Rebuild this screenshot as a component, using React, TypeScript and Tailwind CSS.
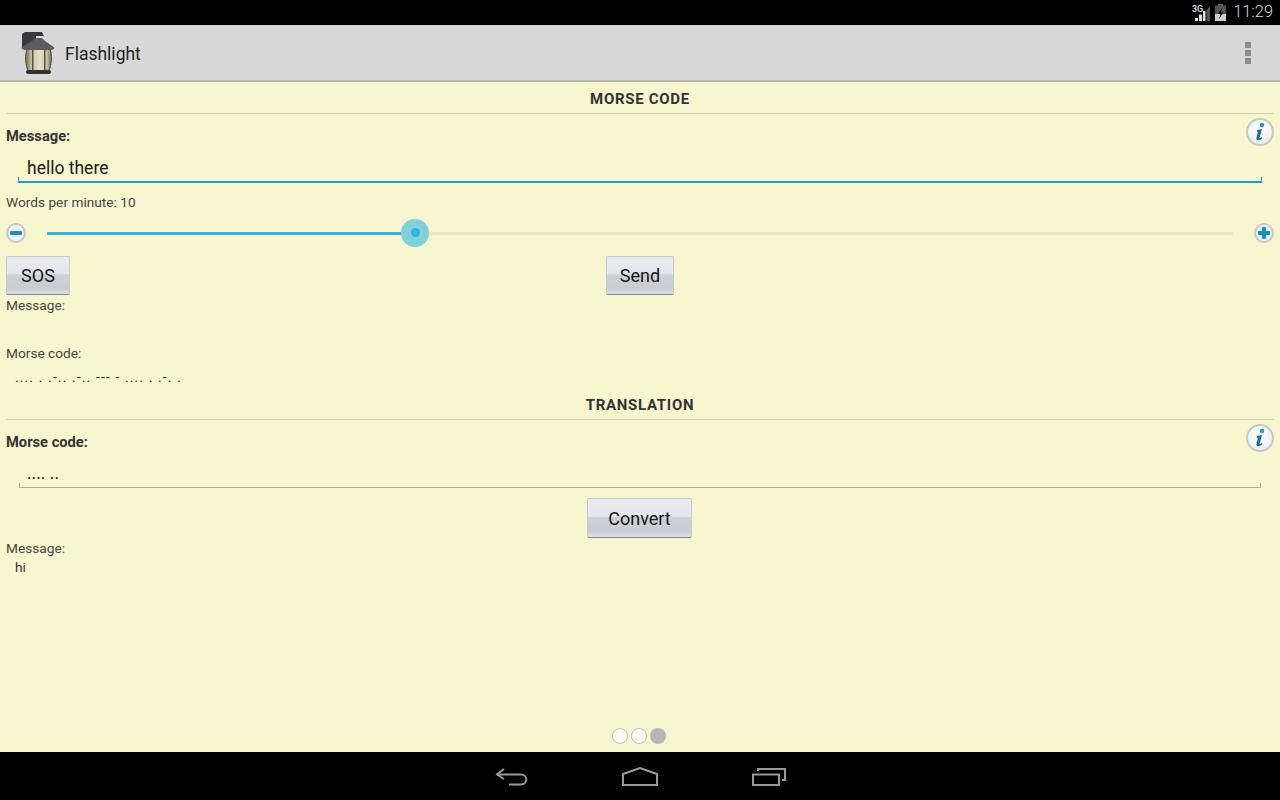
import type { ReactNode } from "react";

function LampIcon() {
  return (
    <svg width="36" height="44" viewBox="0 0 36 44" className="mt-[2px]">
      <defs>
        <linearGradient id="glass" x1="0" x2="1" y1="0" y2="0">
          <stop offset="0" stopColor="#6f6c5a" />
          <stop offset="0.25" stopColor="#cfc7aa" />
          <stop offset="0.55" stopColor="#e6dfc8" />
          <stop offset="0.8" stopColor="#cfc7aa" />
          <stop offset="1" stopColor="#77745f" />
        </linearGradient>
      </defs>
      <path d="M4 2 L7 0 H24 L26 4 H18 V16 H4 Z" fill="#3a3a3c" />
      <path d="M10 39 C7 31 7 24 9 16 H32 C34 24 34 31 31 39 Z" fill="url(#glass)" stroke="#4b4a43" strokeWidth="1" />
      <rect x="14" y="17" width="1.500" height="22" fill="#55534a" />
      <rect x="26" y="17" width="1.500" height="22" fill="#55534a" />
      <path d="M3 16 L14 9 L17 6 H24 L27 9 L37 16 L34 18 H6 Z" fill="#5c5c5f" />
      <rect x="8" y="38" width="25" height="4" rx="2" fill="#333333" />
    </svg>
  );
}

function StatusIcons() {
  return (
    <div className="flex items-center gap-[5px]">
      <svg width="18" height="18" viewBox="0 0 18 18">
        <text x="0" y="8" fontSize="9" fontWeight="500" fill="#e0e0e0" fontFamily="Roboto, sans-serif">3G</text>
        <path d="M3 17 H6 V14 H3 Z M7 17 H10 V10.500 H7 Z M11 17 H13.500 V7 H11 Z" fill="#e4e4e4" />
        <path d="M14.500 17 H18 V2 L14.500 6 Z" fill="#555" />
      </svg>
      <svg width="11" height="17" viewBox="0 0 11 17">
        <rect x="3" y="0" width="5" height="2" fill="#666" />
        <rect x="0" y="1.500" width="11" height="15.500" fill="#555" />
        <rect x="0" y="10" width="11" height="7" fill="#cfcfcf" />
        <path d="M7 4 L3 10 H5.500 L4 15 L8.500 8.500 H6 Z" fill="#000" />
      </svg>
    </div>
  );
}

function InfoBadge() {
  return (
    <div className="flex h-[28px] w-[28px] items-center justify-center rounded-full border-2 border-[#c9c9c4] bg-[radial-gradient(circle_at_50%_35%,#ffffff,#e6e9ec)]">
      <svg width="12" height="20" viewBox="0 0 12 20">
        <circle cx="8" cy="3" r="2.300" fill="#1c9ad0" />
        <path d="M3 8 L8 7 L5.600 15.500 C5.400 16.500 6.500 16.200 8 15 L8.300 16 C6.500 18.300 2 19.500 2.400 16 L3.900 10 L2.800 9.500 Z" fill="#17709c" />
      </svg>
    </div>
  );
}

function RoundStep({ plus }: { plus?: boolean }) {
  return (
    <div className="relative h-[20px] w-[20px] rounded-full border-2 border-[#c9c9c4] bg-[#eef1f3]">
      <div className="absolute left-[2px] top-[6px] h-[4px] w-[12px] rounded-[1px] bg-[#1a8fc4]" />
      {plus && <div className="absolute left-[6px] top-[2px] h-[12px] w-[4px] rounded-[1px] bg-[#1a8fc4]" />}
    </div>
  );
}

function GlossButton({ children, className }: { children: ReactNode; className: string }) {
  return (
    <button
      className={`rounded-[2px] border border-[#c3ccd6] border-b-[#7189ab] bg-[linear-gradient(#e9ebf0_0%,#e3e6ea_46%,#cdd2d6_48%,#c8cdd1_85%,#dde0e2_100%)] text-[18px] leading-none text-[#161616] ${className}`}
    >
      {children}
    </button>
  );
}

function SectionTitle({ children, className = "" }: { children: ReactNode; className?: string }) {
  return (
    <div className={`flex h-[32px] items-center justify-center border-b border-[#cfcfb6] pt-[3px] text-[15px] font-bold tracking-[0.7px] text-[#333333] ${className}`}>
      {children}
    </div>
  );
}

function FieldRow({ label }: { label: string }) {
  return (
    <div className="flex h-[38px] items-start justify-between pt-[4px]">
      <span className="pt-[9px] text-[14.7px] font-bold leading-[18px] text-[#333333]">{label}</span>
      <InfoBadge />
    </div>
  );
}

function Caption({ children, className = "" }: { children: ReactNode; className?: string }) {
  return <div className={`text-[13.7px] leading-[18px] text-[#444444] ${className}`}>{children}</div>;
}

// underline with the small end ticks of the holo text field
function TextField({ value, active }: { value: string; active?: boolean }) {
  const line = active ? "bg-[#1a9dc9]" : "bg-[#b0b08e]";
  return (
    <div className={`relative flex items-center text-[17.5px] text-[#1a1a1a] ${active ? "mx-[12px] h-[31px] border-b-2 border-[#1a9dc9] pl-[9px] pt-[3px]" : "mx-[13px] h-[30px] border-b border-[#b0b08e] pl-[8px] pt-[1px]"}`}>
      {value}
      <div className={`absolute bottom-0 left-0 h-[4px] w-[1px] ${line}`} />
      <div className={`absolute bottom-0 right-0 h-[4px] w-[1px] ${line}`} />
    </div>
  );
}

export default function App() {
  return (
    <div className="flex h-screen w-[1280px] flex-col overflow-hidden bg-black font-['Roboto',sans-serif]">
      <div className="flex h-[25px] shrink-0 items-center justify-end gap-[7px] pr-[7px] text-[16.4px] font-light text-[#d8d8d8]">
        <StatusIcons />
        <span>11:29</span>
      </div>

      <div className="flex h-[57px] shrink-0 items-center justify-between border-b-2 border-[#b6b6b0] bg-[#d8d8d8] pl-[18px] pr-[29px]">
        <div className="flex items-center gap-[11px]">
          <LampIcon />
          <span className="pt-[4px] text-[17.5px] text-[#222222]">Flashlight</span>
        </div>
        <div className="flex flex-col gap-[2px]">
          <div className="h-[6px] w-[6px] bg-[#8e8e8e]" />
          <div className="h-[6px] w-[6px] bg-[#8e8e8e]" />
          <div className="h-[6px] w-[6px] bg-[#8e8e8e]" />
        </div>
      </div>

      <div className="relative flex-1 bg-[#f6f7cf] px-[6px]">
        <SectionTitle>MORSE CODE</SectionTitle>
        <FieldRow label="Message:" />

        <TextField value="hello there" active />

        <Caption className="mt-[10px]">Words per minute: 10</Caption>

        <div className="mt-[10px] flex h-[24px] items-center">
          <RoundStep />
          <div className="relative mx-[21px] h-[3px] flex-1 bg-[#e6e7c4]">
            <div className="h-[3px] w-[368px] bg-[#33b5e0]" />
            <div className="absolute left-[354px] top-[-13px] flex h-[28px] w-[28px] items-center justify-center rounded-full bg-[#7fd1dc]">
              <div className="h-[9px] w-[9px] rounded-full bg-[#33b5e5]" />
            </div>
          </div>
          <RoundStep plus />
        </div>

        <div className="mt-[11px] grid grid-cols-[1fr_auto_1fr]">
          <GlossButton className="h-[39px] w-[64px]">SOS</GlossButton>
          <GlossButton className="h-[39px] w-[68px]">Send</GlossButton>
        </div>

        <Caption className="mt-[1px]">Message:</Caption>
        <Caption className="mt-[30px]">Morse code:</Caption>
        <div className="mt-[6px] pl-[9px] text-[14px] leading-[18px] tracking-[1.1px] text-[#333333]">
          .... . .-.. .-.. --- - .... . .-. .
        </div>

        <SectionTitle className="mt-[2px]">TRANSLATION</SectionTitle>
        <FieldRow label="Morse code:" />

        <TextField value=".... .." />

        <div className="mt-[10px] flex justify-center pr-[1px]">
          <GlossButton className="h-[40px] w-[105px] pt-[2px]">Convert</GlossButton>
        </div>

        <Caption className="mt-[1px]">Message:</Caption>
        <div className="mt-[1px] pl-[9px] text-[13.7px] leading-[18px] text-[#333333]">hi</div>

        <div className="absolute bottom-[8px] left-0 flex w-full justify-center gap-[3px] pr-[2px]">
          <div className="h-[16px] w-[16px] rounded-full border border-[#bdbdbd] bg-[#fbfbf7]" />
          <div className="h-[16px] w-[16px] rounded-full border border-[#bdbdbd] bg-[#fbfbf7]" />
          <div className="h-[16px] w-[16px] rounded-full bg-[#b7b7b7]" />
        </div>
      </div>

      <div className="flex h-[48px] shrink-0 items-center justify-center gap-[94px] pt-[2px]">
        <svg width="34" height="20" viewBox="0 0 34 20" fill="none" stroke="#9a9a9a" strokeWidth="2">
          <path d="M10 2 L3 7.500 L10 12" />
          <path d="M3 7.500 H27 C34 7.500 34 17.500 27 17.500 H15" />
        </svg>
        <svg width="36" height="20" viewBox="0 0 36 20" fill="none" stroke="#9a9a9a" strokeWidth="2">
          <path d="M1 18 V7 L18 1 L35 7 V18 Z" />
        </svg>
        <svg width="34" height="18" viewBox="0 0 34 18" fill="none" stroke="#9a9a9a" strokeWidth="2">
          <rect x="1" y="6.500" width="26" height="10.500" />
          <path d="M6 3 V1 H33 V12 H30" />
        </svg>
      </div>
    </div>
  );
}
